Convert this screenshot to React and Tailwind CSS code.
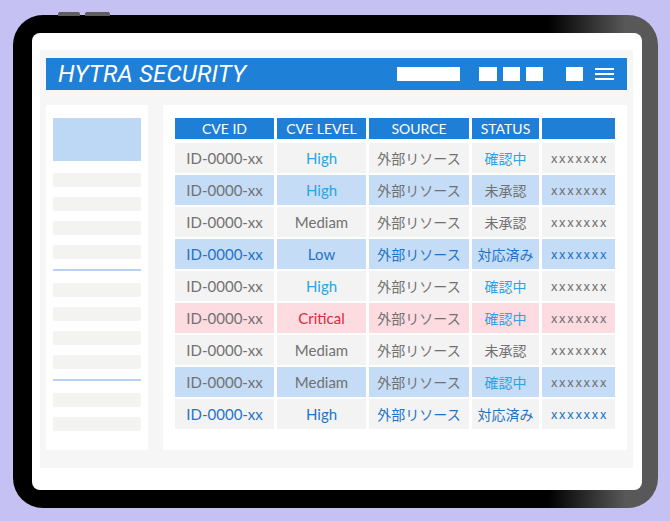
import React from "react";

const GRAY = "text-[#717171]";
const SKY = "text-[#2ba3e4]";
const BLUE = "text-[#1f73c6]";
const RED = "text-[#e2273d]";

const rows = [
  { bg: "bg-[#f3f3f3]", id: GRAY, level: ["High", SKY], src: GRAY, status: ["確認中", SKY], x: GRAY },
  { bg: "bg-[#c5dcf6]", id: GRAY, level: ["High", SKY], src: GRAY, status: ["未承認", GRAY], x: GRAY },
  { bg: "bg-[#f3f3f3]", id: GRAY, level: ["Mediam", GRAY], src: GRAY, status: ["未承認", GRAY], x: GRAY },
  { bg: "bg-[#c5dcf6]", id: BLUE, level: ["Low", BLUE], src: BLUE, status: ["対応済み", BLUE], x: BLUE },
  { bg: "bg-[#f3f3f3]", id: GRAY, level: ["High", SKY], src: GRAY, status: ["確認中", SKY], x: GRAY },
  { bg: "bg-[#fddce1]", id: GRAY, level: ["Critical", RED], src: GRAY, status: ["確認中", SKY], x: GRAY },
  { bg: "bg-[#f3f3f3]", id: GRAY, level: ["Mediam", GRAY], src: GRAY, status: ["未承認", GRAY], x: GRAY },
  { bg: "bg-[#c5dcf6]", id: GRAY, level: ["Mediam", GRAY], src: GRAY, status: ["確認中", SKY], x: GRAY },
  { bg: "bg-[#f3f3f3]", id: BLUE, level: ["High", BLUE], src: BLUE, status: ["対応済み", BLUE], x: BLUE },
];

const latin = "font-['Lato','Noto_Sans_CJK_JP',sans-serif]";
const jp = "font-['Noto_Sans_CJK_JP',sans-serif]";

function Cell({ bg, className, children }) {
  return (
    <div className={`h-[30px] flex items-center justify-center ${bg} ${className}`}>
      {children}
    </div>
  );
}

function SideBar() {
  return <div className="h-[14px] rounded-[2px] bg-[#f3f3f1] mb-[10px]" />;
}

function SideLine() {
  return <div className="h-[2px] bg-[#b8d0f1] mt-[2px] mb-[12px]" />;
}

export default function App() {
  return (
    <div className="w-[670px] h-[521px] bg-[#c6c1f3] pt-[15px] pl-[13px] overflow-hidden">
      <div className="relative w-[645px] h-[493px] rounded-[30px] bg-[linear-gradient(to_right,#000_0%,#000_83%,#585858_95%)] pt-[18px] pl-[19px] pr-[16px] pb-[18px]">
        {/* buttons on the top edge */}
        <div className="absolute -top-[3px] left-[45px] w-[22px] h-[4px] rounded-t-[2px] bg-[#5e5e5e]" />
        <div className="absolute -top-[3px] left-[72px] w-[25px] h-[4px] rounded-t-[2px] bg-[#5e5e5e]" />

        <div className="w-full h-full bg-white rounded-[8px] pt-[17px] pl-[8px] pr-[9px] pb-[22px]">
          <div className="h-full bg-[#f6f6f6] px-[6px] pt-[8px] pb-[18px] flex flex-col">
            {/* top bar */}
            <div className="h-[32px] shrink-0 bg-[#1f80d8] flex items-center pl-[12px] pr-[13px]">
              <span className="font-['Roboto',sans-serif] italic text-white text-[24px] leading-none tracking-[0.2px]">
                HYTRA SECURITY
              </span>
              <div className="ml-auto flex items-center">
                <div className="w-[63px] h-[14px] bg-white" />
                <div className="ml-[19px] w-[18px] h-[14px] bg-white" />
                <div className="ml-[6px] w-[17px] h-[14px] bg-white" />
                <div className="ml-[6px] w-[17px] h-[14px] bg-white" />
                <div className="ml-[23px] w-[17px] h-[14px] bg-white" />
                <div className="ml-[12px] w-[19px] flex flex-col gap-[3px]">
                  <div className="h-[2px] bg-white" />
                  <div className="h-[2px] bg-white" />
                  <div className="h-[2px] bg-white" />
                </div>
              </div>
            </div>

            <div className="flex flex-1 mt-[15px] gap-[15px]">
              {/* side menu */}
              <div className="w-[102px] bg-white pt-[13px] px-[7px]">
                <div className="h-[43px] bg-[#bdd8f5] mb-[12px]" />
                <SideBar />
                <SideBar />
                <SideBar />
                <SideBar />
                <SideLine />
                <SideBar />
                <SideBar />
                <SideBar />
                <SideBar />
                <SideLine />
                <SideBar />
                <SideBar />
              </div>

              {/* CVE table */}
              <div className="flex-1 bg-white pt-[13px] pl-[12px]">
                <div className="grid grid-cols-[99px_89px_100px_67px_73px] gap-x-[3px] gap-y-[2px]">
                  {["CVE ID", "CVE LEVEL", "SOURCE", "STATUS", ""].map((h, i) => (
                    <div
                      key={i}
                      className={`h-[21px] mb-[2px] bg-[#1f7fd7] flex items-center justify-center text-white text-[14px] ${latin}`}
                    >
                      {h}
                    </div>
                  ))}
                  {rows.map((r, i) => (
                    <React.Fragment key={i}>
                      <Cell bg={r.bg} className={`${latin} text-[15px] ${r.id}`}>ID-0000-xx</Cell>
                      <Cell bg={r.bg} className={`${latin} text-[15px] ${r.level[1]}`}>{r.level[0]}</Cell>
                      <Cell bg={r.bg} className={`${jp} text-[14px] ${r.src}`}>外部リソース</Cell>
                      <Cell bg={r.bg} className={`${jp} text-[14px] ${r.status[1]}`}>{r.status[0]}</Cell>
                      <Cell bg={r.bg} className={`${jp} text-[13px] tracking-[1.7px] pl-[2px] ${r.x}`}>xxxxxxx</Cell>
                    </React.Fragment>
                  ))}
                </div>
              </div>
            </div>
          </div>
        </div>
      </div>
    </div>
  );
}
